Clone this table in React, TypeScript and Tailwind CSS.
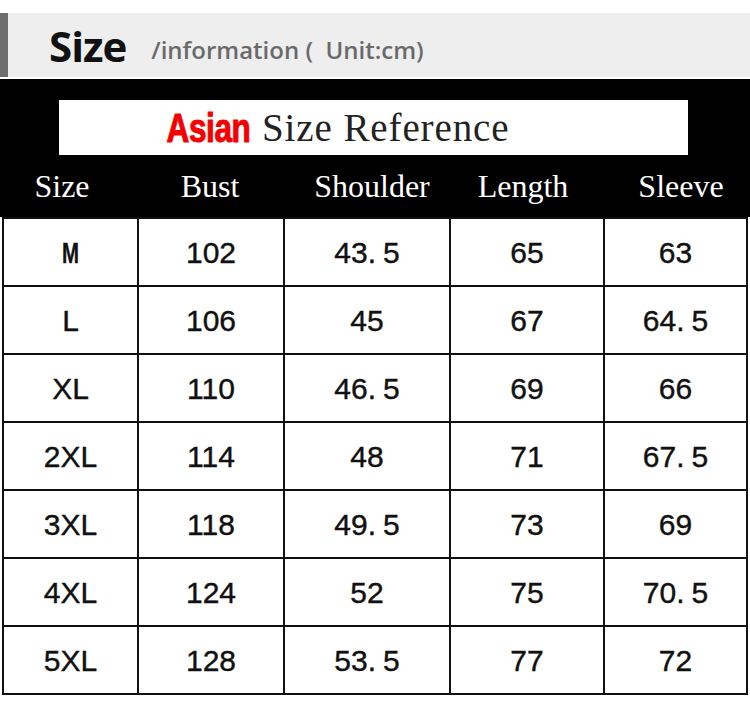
import React from "react";

const rows: string[][] = [
  ["M", "102", "43.5", "65", "63"],
  ["L", "106", "45", "67", "64.5"],
  ["XL", "110", "46.5", "69", "66"],
  ["2XL", "114", "48", "71", "67.5"],
  ["3XL", "118", "49.5", "73", "69"],
  ["4XL", "124", "52", "75", "70.5"],
  ["5XL", "128", "53.5", "77", "72"],
];

function Val({ v }: { v: string }) {
  if (v === "M") {
    return <span className="inline-block scale-x-[0.68] font-bold">M</span>;
  }
  const i = v.indexOf(".");
  if (i < 0) return <span>{v}</span>;
  return (
    <span>
      {v.slice(0, i + 1)}
      <span className="ml-[7px]">{v.slice(i + 1)}</span>
    </span>
  );
}

export default function App() {
  return (
    <div className="w-[750px] h-[707px] bg-white overflow-hidden">
      <div className="h-[13px]" />
      <div className="h-[64px] flex bg-[#eeeeee]">
        <div className="w-[8px] bg-[#6e6e6e]" />
        <div className="flex items-end pb-[6px] pl-[41px]">
          <span className="font-['Open_Sans',sans-serif] font-bold text-[42px] leading-none tracking-[-1px] text-[#111] mb-[4px]">
            Size
          </span>
          <span className="ml-[25px] mb-[9px] font-['Open_Sans',sans-serif] font-semibold text-[24px] leading-none text-[#6a6a6a] whitespace-pre">
            {"/information (  Unit:cm)"}
          </span>
        </div>
      </div>
      <div className="h-[2px]" />
      <div className="h-[138px] bg-black pt-[21px] overflow-hidden">
        <div className="ml-[59px] w-[629px] h-[55px] bg-white flex items-center pl-[108px]">
          <span className="font-['Liberation_Sans',sans-serif] font-bold text-[38px] leading-none text-[#f50000] inline-block scale-x-[0.83] scale-y-[1.05] -mx-[9px] tracking-[-0.5px] [-webkit-text-stroke:1px_#f50000]">
            Asian
          </span>
          <span className="ml-[12px] font-['Liberation_Serif',serif] text-[39px] leading-none text-[#222] tracking-[0.9px]">
            Size Reference
          </span>
        </div>
        <div className="h-[62px] grid grid-cols-[124px_172px_152px_150px_166px] items-center font-['Liberation_Serif',serif] text-[32px] text-white leading-none">
          <div className="text-center">Size</div>
          <div className="text-center">Bust</div>
          <div className="text-center">Shoulder</div>
          <div className="text-center">Length</div>
          <div className="text-center">Sleeve</div>
        </div>
      </div>
      <div className="ml-[2px] w-[746px] border-l-2 border-t-2 border-[#111] grid grid-cols-[135px_146px_166px_154px_143px] font-['Liberation_Sans',sans-serif] text-[30px] text-[#111] [-webkit-text-stroke:0.4px_#111]">
        {rows.map((r, ri) =>
          r.map((v, ci) => (
            <div
              key={ri + "-" + ci}
              className="h-[68px] border-r-2 border-b-2 border-[#111] flex items-center justify-center"
            >
              <Val v={v} />
            </div>
          ))
        )}
      </div>
    </div>
  );
}
